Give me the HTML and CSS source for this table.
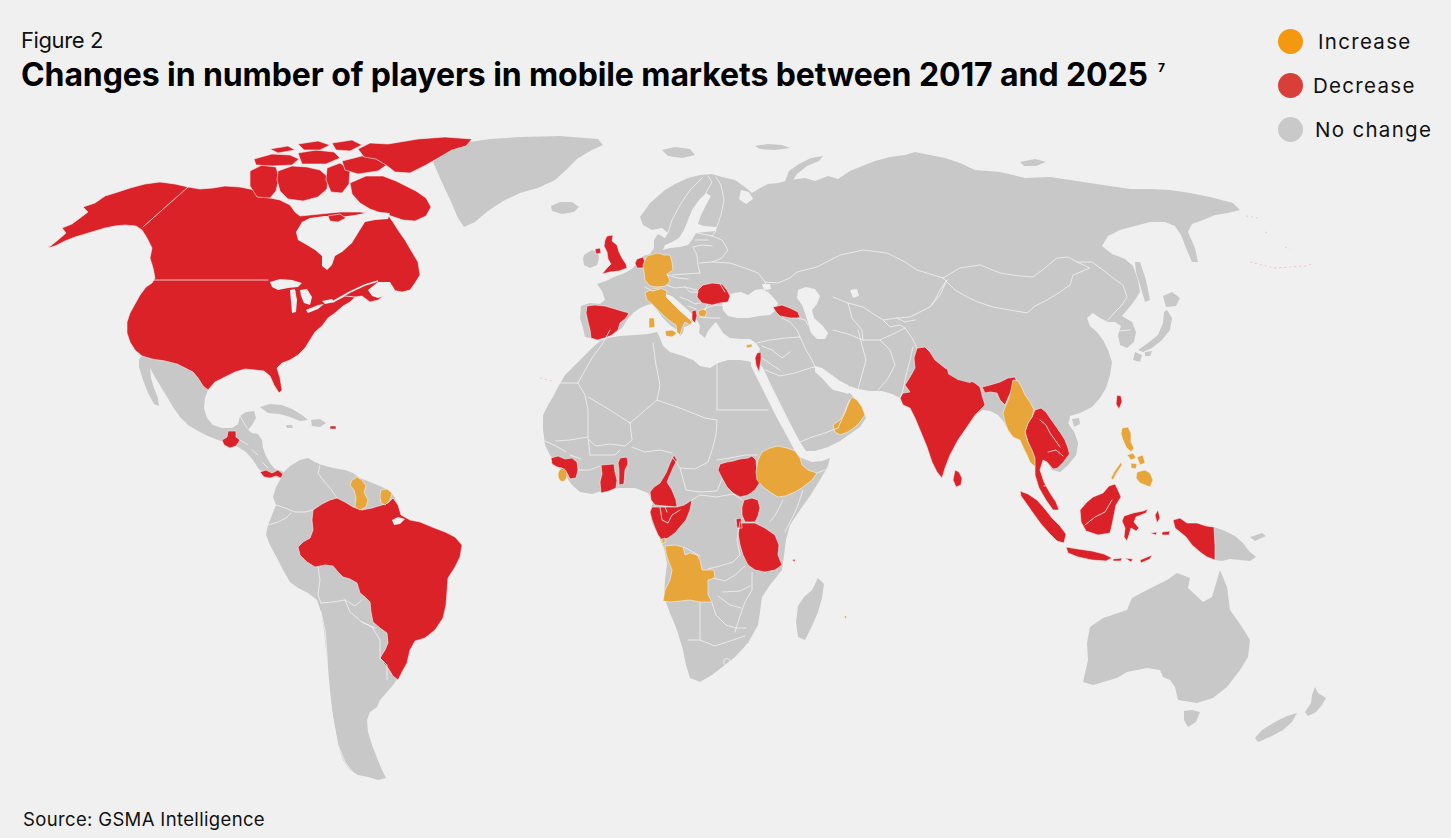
FILE: index.html
```html
<!DOCTYPE html>
<html lang="en">
<head>
<meta charset="utf-8">
<title>Figure 2</title>
<link rel="stylesheet" href="styles.css">
</head>
<body>
<div class="page">
  <header class="top">
    <div class="titles">
      <div class="kicker">Figure 2</div>
      <h1 class="title">Changes in number of players in mobile markets between 2017 and 2025<sup class="fn">7</sup></h1>
    </div>
    <ul class="legend">
      <li class="item"><span class="dot dot-inc"></span><span class="lbl lbl-inc">Increase</span></li>
      <li class="item"><span class="dot dot-dec"></span><span class="lbl">Decrease</span></li>
      <li class="item"><span class="dot dot-none"></span><span class="lbl lbl-none">No change</span></li>
    </ul>
  </header>

  <svg class="map" viewBox="0 135 1451 655" xmlns="http://www.w3.org/2000/svg">
    <g class="land">
      <path d="M432,150 L455,145 L470,142 L490,139 L520,137 L560,136 L598,139 L603,145 L590,151 L577,159 L566,170 L555,180 L538,188 L520,193 L503,201 L488,211 L475,222 L464,227 L458,218 L452,204 L446,191 L440,178 L434,164 Z"/>
      <path d="M551,206 L560,202 L572,202 L579,207 L574,212 L562,214 L552,211 Z"/>
      <path d="M662,150 L675,147 L690,149 L695,155 L682,158 L668,156 Z"/>
      <path d="M755,146 L768,144 L782,145 L790,148 L775,150 L760,149 Z"/>
      <path d="M785,181 L789,171 L799,164 L811,158 L823,156 L819,161 L807,166 L797,174 L791,183 Z"/>
      <path d="M1020,162 L1035,159 L1046,162 L1036,166 L1024,166 Z"/>
      <path d="M581,306 L590,303 L600,304 L605,300 L602,291 L597,284 L606,281 L614,277 L625,273 L633,268 L638,262 L643,256 L650,254 L654,248 L654,240 L658,234 L665,238 L668,233 L662,228 L652,230 L643,225 L640,217 L645,210 L650,203 L657,197 L665,190 L675,184 L688,178 L700,175 L712,174 L722,177 L735,180 L745,187 L752,193 L760,188 L768,184 L778,183 L790,180 L805,178 L815,181 L828,176 L838,179 L850,171 L862,166 L875,161 L890,157 L905,155 L915,152 L930,155 L945,158 L960,163 L975,170 L1000,172 L1025,178 L1050,177 L1070,180 L1090,183 L1110,186 L1130,189 L1150,189 L1170,190 L1190,193 L1210,197 L1233,203 L1240,210 L1228,213 L1215,215 L1203,220 L1192,224 L1188,232 L1195,248 L1198,262 L1192,262 L1186,248 L1181,235 L1175,226 L1165,222 L1150,222 L1135,226 L1120,230 L1108,236 L1102,246 L1112,254 L1125,259 L1133,266 L1138,280 L1140,292 L1133,303 L1127,310 L1122,316 L1132,322 L1136,332 L1134,342 L1127,348 L1120,345 L1118,335 L1121,326 L1115,322 L1108,322 L1100,318 L1093,313 L1087,318 L1090,326 L1097,332 L1103,340 L1108,350 L1112,362 L1110,375 L1106,388 L1100,398 L1092,407 L1080,413 L1070,416 L1068,423 L1074,432 L1078,443 L1076,455 L1068,465 L1060,472 L1052,470 L1047,462 L1043,460 L1040,470 L1044,482 L1050,493 L1056,502 L1059,510 L1053,510 L1046,500 L1039,488 L1035,475 L1035,467 L1030,462 L1027,455 L1023,447 L1020,440 L1013,437 L1008,430 L1004,422 L998,415 L990,411 L983,410 L977,414 L967,427 L958,440 L950,455 L945,468 L942,478 L937,472 L932,462 L927,447 L920,430 L915,418 L910,408 L903,405 L900,398 L892,394 L882,391 L870,391 L858,389 L850,386 L849,392 L856,400 L862,407 L866,418 L860,427 L850,434 L840,441 L828,447 L815,451 L803,451 L799,457 L812,462 L822,461 L830,458 L828,466 L820,480 L810,496 L800,510 L790,525 L786,540 L784,555 L782,570 L770,585 L762,597 L760,612 L758,625 L748,643 L735,657 L725,665 L712,675 L700,682 L690,678 L686,665 L683,650 L677,630 L670,613 L664,597 L665,580 L667,563 L664,548 L658,535 L652,523 L650,512 L653,502 L648,493 L635,488 L620,488 L605,490 L592,494 L580,492 L572,485 L565,475 L557,465 L550,455 L545,445 L543,430 L543,415 L548,405 L553,397 L558,387 L565,375 L575,365 L585,355 L593,347 L600,341 L594,339 L585,337 L583,328 L580,318 Z"/>
      <path d="M584,255 L592,250 L598,252 L599,258 L597,265 L590,268 L584,265 L583,259 Z"/>
      <path d="M650,308 L653,307 L654,313 L651,315 Z"/>
      <path d="M710,342 L720,341 L721,344 L711,345 Z"/>
      <path d="M1135,262 L1140,262 L1146,280 L1150,300 L1145,302 L1140,285 L1136,272 Z"/>
      <path d="M1163,296 L1172,292 L1180,298 L1176,306 L1166,307 Z"/>
      <path d="M1167,310 L1172,318 L1170,330 L1162,340 L1152,348 L1143,352 L1138,350 L1148,343 L1158,335 L1163,323 L1164,312 Z"/>
      <path d="M1135,352 L1142,355 L1140,362 L1133,360 Z"/>
      <path d="M1145,352 L1152,351 L1150,356 L1145,356 Z"/>
      <path d="M1072,419 L1079,418 L1080,424 L1074,427 Z"/>
      <path d="M1214,527 L1225,531 L1235,536 L1243,543 L1248,550 L1256,557 L1250,561 L1240,560 L1230,559 L1222,561 L1215,560 Z"/>
      <path d="M1250,537 L1262,533 L1266,536 L1255,541 Z"/>
      <path d="M1090,627 L1103,618 L1127,610 L1132,598 L1147,590 L1157,585 L1167,580 L1177,573 L1190,578 L1188,588 L1203,602 L1212,597 L1217,580 L1220,570 L1227,587 L1230,610 L1242,627 L1250,640 L1248,657 L1240,670 L1227,687 L1213,698 L1197,703 L1178,700 L1175,687 L1170,680 L1163,677 L1160,670 L1147,668 L1127,672 L1117,678 L1093,685 L1083,682 L1088,660 L1087,643 Z"/>
      <path d="M1184,711 L1192,710 L1200,712 L1196,722 L1188,727 L1184,720 Z"/>
      <path d="M1315,687 L1318,693 L1326,698 L1322,705 L1316,712 L1308,716 L1305,712 L1311,703 L1312,695 Z"/>
      <path d="M1297,713 L1292,722 L1283,730 L1270,737 L1258,742 L1255,738 L1262,730 L1275,722 L1287,716 Z"/>
      <path d="M818,578 L824,584 L822,598 L818,612 L812,626 L805,640 L798,637 L796,622 L798,606 L804,597 L812,590 Z"/>
      <path d="M142,356 L152,359 L165,361 L177,364 L185,368 L193,372 L198,378 L203,386 L208,390 L205,398 L204,408 L207,418 L213,425 L222,428 L232,428 L238,424 L240,416 L246,412 L254,411 L256,418 L252,425 L248,430 L252,433 L258,434 L262,440 L263,448 L266,456 L270,463 L275,469 L282,471 L286,475 L282,479 L276,477 L270,478 L264,474 L258,468 L253,460 L246,452 L238,447 L228,443 L218,440 L208,436 L198,431 L188,425 L180,417 L173,407 L167,397 L161,387 L155,377 L150,368 L151,378 L154,388 L158,398 L159,406 L154,404 L148,393 L143,380 L139,367 L139,359 Z"/>
      <path d="M260,407 L270,404 L282,405 L292,409 L302,415 L308,420 L300,421 L290,417 L280,414 L268,413 Z"/>
      <path d="M311,420 L320,419 L326,423 L320,427 L312,426 Z"/>
      <path d="M286,425 L292,425 L293,428 L287,428 Z"/>
      <path d="M282,474 L290,466 L300,460 L308,458 L315,462 L322,465 L333,468 L345,470 L353,473 L360,478 L370,482 L380,486 L388,490 L394,496 L398,505 L401,515 L410,520 L420,522 L432,527 L445,532 L455,537 L462,545 L460,557 L455,567 L448,578 L447,592 L446,605 L443,618 L435,630 L425,638 L415,641 L410,650 L407,663 L400,675 L393,685 L387,692 L380,700 L377,707 L370,712 L367,720 L368,732 L372,745 L377,758 L382,770 L386,778 L378,780 L368,777 L358,775 L350,770 L343,760 L338,745 L335,728 L332,710 L330,690 L328,670 L326,650 L324,630 L321,612 L317,600 L308,593 L298,588 L290,582 L283,570 L277,558 L270,545 L266,535 L268,525 L272,515 L276,505 L273,497 L276,487 L280,480 Z"/>
    </g>

    <g class="sea">
      <path d="M597,339 L605,336 L615,333 L622,328 L627,320 L633,313 L640,308 L647,305 L652,304 L657,310 L663,318 L670,325 L677,330 L680,336 L683,333 L684,327 L690,325 L693,321 L685,316 L677,310 L668,300 L665,294 L672,296 L680,303 L688,310 L696,318 L700,326 L699,333 L705,338 L708,331 L712,326 L716,322 L720,328 L723,333 L730,338 L740,339 L750,339 L756,343 L760,349 L757,358 L752,362 L740,360 L728,360 L718,363 L710,368 L700,366 L693,360 L683,356 L670,352 L663,346 L660,338 L657,332 L648,334 L635,335 L620,336 L608,338 L600,341 Z"/>
      <path d="M722,302 L727,296 L734,293 L741,292 L748,295 L755,290 L762,289 L768,292 L773,297 L778,303 L776,310 L770,315 L760,316 L748,318 L737,318 L728,316 L723,310 Z"/>
      <path d="M762,284 L770,284 L771,289 L764,290 Z"/>
      <path d="M798,290 L806,287 L815,289 L820,296 L817,304 L812,310 L814,318 L822,325 L828,333 L825,339 L817,339 L811,333 L808,323 L805,313 L802,305 L797,298 Z"/>
      <path d="M850,290 L857,289 L859,296 L853,298 Z"/>
      <path d="M815,366 L822,368 L832,375 L840,381 L848,385 L852,390 L848,394 L842,392 L833,390 L828,385 L822,378 L815,372 Z"/>
      <path d="M751,360 L757,359 L763,368 L771,385 L781,405 L791,425 L800,442 L806,451 L802,458 L797,455 L788,438 L777,418 L767,398 L758,380 L751,366 Z"/>
      <path d="M663,250 L670,248 L680,247 L688,245 L692,240 L696,233 L705,232 L716,231 L716,227 L704,226 L698,224 L701,215 L706,205 L711,196 L706,193 L699,200 L692,210 L688,220 L684,230 L679,238 L672,242 L665,245 Z"/>
      <path d="M741,190 L749,192 L753,199 L746,204 L739,199 Z"/>
    </g>

    <g class="dec">
      <path d="M48,248 L58,240 L66,233 L62,228 L72,224 L80,218 L88,212 L83,207 L95,203 L105,196 L118,192 L130,188 L145,184 L160,182 L175,184 L188,187 L200,189 L213,188 L225,186 L240,187 L255,190 L262,195 L270,198 L280,200 L290,205 L295,212 L300,216 L320,214 L340,212 L360,212 L375,214 L388,215 L393,222 L398,230 L405,240 L412,252 L418,262 L420,275 L415,283 L410,290 L402,292 L392,290 L385,295 L378,300 L370,302 L362,296 L355,297 L350,302 L343,306 L335,313 L328,318 L322,326 L315,332 L310,340 L305,348 L298,355 L290,360 L282,363 L277,368 L280,378 L282,390 L279,393 L274,385 L270,376 L264,371 L255,370 L245,369 L235,372 L225,377 L215,382 L208,390 L203,386 L198,378 L193,372 L185,368 L177,364 L165,361 L152,359 L142,356 L135,350 L130,342 L127,333 L127,322 L130,313 L135,304 L140,295 L146,287 L152,283 L155,278 L153,268 L150,258 L152,248 L147,238 L142,230 L136,226 L125,225 L115,226 L105,228 L95,231 L85,234 L75,237 L65,241 L55,246 Z"/>
      <path d="M250,171 L262,165 L276,167 L279,178 L276,191 L270,198 L257,197 L250,186 Z"/>
      <path d="M278,171 L292,166 L307,167 L320,170 L328,177 L327,189 L318,197 L303,201 L288,199 L280,191 L277,180 Z"/>
      <path d="M254,159 L272,154 L290,155 L299,159 L292,165 L272,166 L256,165 Z"/>
      <path d="M298,153 L316,150 L334,152 L340,158 L326,164 L302,164 Z"/>
      <path d="M298,144 L318,141 L330,145 L320,150 L304,150 Z"/>
      <path d="M332,143 L352,140 L362,145 L350,151 L336,150 Z"/>
      <path d="M270,149 L288,146 L295,150 L278,153 Z"/>
      <path d="M327,168 L340,163 L350,170 L349,184 L342,193 L331,192 L326,180 Z"/>
      <path d="M342,161 L362,156 L382,158 L388,164 L378,171 L358,174 L345,170 Z"/>
      <path d="M358,149 L370,143 L388,144 L400,142 L418,139 L445,137 L472,139 L466,146 L452,150 L440,157 L426,165 L410,173 L395,172 L386,165 L376,159 L364,157 Z"/>
      <path d="M350,183 L366,176 L383,176 L396,181 L406,186 L416,191 L426,198 L431,207 L426,216 L415,221 L403,220 L391,216 L381,213 L370,209 L360,203 L352,194 Z"/>
    </g>
    <g class="sea">
      <path d="M296,232 L302,222 L310,218 L325,216 L340,217 L355,215 L365,213 L378,212 L390,213 L388,219 L375,220 L365,222 L360,230 L352,243 L342,252 L335,256 L332,265 L327,270 L322,266 L322,256 L315,250 L305,244 L298,240 Z"/>
      <path d="M270,282 L280,279 L292,280 L302,283 L298,287 L288,288 L278,290 L272,287 Z"/>
      <path d="M290,290 L295,289 L297,300 L296,312 L292,313 L291,302 Z"/>
      <path d="M300,290 L307,289 L312,297 L310,305 L304,303 L301,296 Z"/>
      <path d="M306,310 L318,305 L324,304 L318,309 L308,313 Z"/>
      <path d="M322,301 L332,299 L335,302 L325,304 Z"/>
      <path d="M368,290 L378,282 L390,282 L395,290 L388,295 L378,298 L372,296 Z"/>
    </g>
    <path class="river" d="M334,301 L350,292 L365,285 L378,281"/>
    <g class="dec">
      <path d="M328,216 L340,214 L346,218 L338,222 L330,221 Z"/>
      <path d="M228,431 L236,431 L236,437 L240,440 L236,446 L230,448 L224,445 L222,440 L227,437 Z"/>
      <path d="M260,472 L266,470 L272,473 L278,470 L283,474 L281,478 L276,476 L270,478 L264,477 Z"/>
      <path d="M330,426 L336,426 L336,429 L330,429 Z"/>
      <path d="M313,510 L322,504 L330,500 L337,498 L345,502 L353,507 L362,510 L372,508 L382,505 L388,503 L393,498 L398,505 L401,515 L410,520 L420,522 L432,527 L445,532 L455,537 L462,545 L460,557 L455,567 L448,578 L447,592 L446,605 L443,618 L435,630 L425,638 L415,641 L410,650 L407,663 L402,672 L398,680 L393,676 L388,668 L383,662 L380,658 L385,650 L388,643 L387,633 L380,628 L373,622 L371,612 L370,602 L365,597 L360,593 L357,583 L350,579 L343,577 L338,572 L333,566 L325,565 L315,567 L307,562 L300,555 L298,547 L303,542 L310,538 L313,530 L312,520 Z"/>
    </g>
    <g class="sea">
      <path d="M392,520 L398,517 L405,519 L400,524 L394,525 Z"/>
    </g>
    <g class="inc">
      <path d="M352,480 L357,477 L362,480 L366,486 L364,492 L368,500 L366,507 L360,510 L355,507 L356,498 L354,490 L350,485 Z"/>
      <path d="M381,490 L387,489 L392,493 L390,500 L385,505 L381,503 L380,496 Z"/>
    </g>

    <g class="dec">
      <path d="M607,236 L613,235 L612,241 L617,245 L619,252 L622,258 L626,264 L627,268 L619,271 L610,272 L602,274 L607,268 L611,264 L608,259 L607,252 L604,246 L605,240 Z"/>
      <path d="M595,249 L600,248 L601,253 L596,254 Z"/>
      <path d="M637,259 L643,257 L645,262 L643,268 L637,268 L635,263 Z"/>
      <path d="M587,306 L595,305 L605,306 L612,308 L622,311 L629,313 L626,318 L620,323 L618,330 L612,335 L605,338 L597,340 L591,338 L590,330 L588,322 L586,313 Z"/>
      <path d="M703,285 L712,283 L722,284 L727,290 L730,296 L728,302 L720,303 L712,305 L702,303 L697,297 L698,290 Z"/>
      <path d="M692,311 L696,310 L697,316 L695,323 L692,320 Z"/>
      <path d="M773,307 L782,305 L790,308 L798,312 L800,318 L790,318 L780,316 L776,312 Z"/>
      <path d="M757,353 L761,352 L761,360 L759,372 L756,365 L755,358 Z"/>
    </g>
    <g class="inc">
      <path d="M647,256 L654,254 L658,253 L664,255 L670,255 L672,262 L673,270 L667,274 L670,281 L666,286 L658,287 L650,286 L645,280 L644,272 L643,265 L645,260 Z"/>
      <path d="M645,293 L652,289 L660,288 L667,291 L666,297 L672,303 L680,311 L687,317 L692,322 L690,325 L685,322 L682,328 L680,335 L677,332 L676,325 L670,321 L663,315 L657,309 L652,304 L647,300 Z"/>
      <path d="M649,318 L654,318 L655,327 L649,328 Z"/>
      <path d="M665,331 L672,330 L677,333 L672,337 L666,336 Z"/>
      <path d="M698,311 L704,309 L707,312 L705,317 L699,316 Z"/>
      <path d="M746,345 L752,344 L752,347 L747,348 Z"/>
    </g>

    <g class="dec">
      <path d="M551,458 L558,456 L565,459 L572,458 L577,462 L578,470 L576,478 L570,479 L567,473 L562,468 L557,467 L552,464 Z"/>
      <path d="M601,465 L614,464 L615,472 L617,480 L616,488 L609,491 L601,493 L600,482 L602,474 Z"/>
      <path d="M620,458 L627,457 L628,464 L625,470 L624,484 L619,485 L619,470 L618,463 Z"/>
      <path d="M674,455 L677,460 L673,468 L670,475 L667,482 L672,490 L676,500 L677,507 L665,506 L655,505 L651,500 L650,492 L654,487 L660,483 L666,473 L670,463 Z"/>
      <path d="M652,507 L665,507 L677,507 L684,505 L692,500 L690,510 L686,520 L680,527 L675,533 L668,538 L662,540 L658,535 L655,528 L652,520 L650,512 Z"/>
      <path d="M720,464 L727,462 L733,461 L740,459 L748,458 L752,456 L756,460 L757,472 L760,482 L755,490 L748,495 L740,497 L733,493 L727,487 L722,478 L718,470 Z"/>
      <path d="M744,500 L752,498 L758,500 L760,508 L758,516 L755,522 L745,522 L742,515 L742,507 Z"/>
      <path d="M740,523 L755,523 L765,528 L775,535 L779,545 L778,555 L782,565 L775,570 L765,572 L755,570 L748,565 L743,555 L740,545 L738,533 Z"/>
      <path d="M736,519 L741,518 L742,528 L737,528 Z"/>
      <path d="M792,560 L795,559 L795,562 Z"/>
    </g>
    <g class="inc">
      <ellipse cx="562.5" cy="475" rx="4.5" ry="6.5"/>
      <path d="M762,452 L770,448 L778,446 L787,448 L795,451 L800,458 L802,465 L808,470 L817,473 L812,480 L803,487 L795,492 L785,496 L778,497 L770,492 L763,487 L757,480 L756,472 L758,460 Z"/>
      <path d="M665,546 L675,545 L683,547 L685,555 L690,553 L697,555 L700,560 L702,570 L714,570 L715,578 L708,580 L708,595 L712,602 L700,602 L690,600 L680,601 L670,602 L663,601 L665,590 L670,580 L672,570 L668,560 L666,553 Z"/>
      <path d="M662,539 L665,538 L665,543 L662,543 Z"/>
      <path d="M852,397 L857,400 L862,407 L865,415 L860,422 L855,427 L848,432 L840,435 L835,432 L833,425 L840,420 L845,412 L848,403 Z"/>
      <circle cx="845.5" cy="617" r="1.2"/>
    </g>

    <g class="dec">
      <path d="M917,348 L925,347 L930,352 L935,360 L945,368 L955,373 L965,378 L975,383 L980,387 L982,395 L985,405 L980,410 L975,415 L967,427 L958,440 L950,455 L945,468 L942,478 L937,472 L932,462 L927,447 L920,430 L915,418 L910,408 L903,405 L900,398 L903,393 L910,392 L905,385 L910,377 L915,368 L914,358 Z"/>
      <path d="M982,387 L990,385 L1000,382 L1008,378 L1015,377 L1017,383 L1012,390 L1008,398 L1005,405 L1000,400 L997,393 L990,392 L985,393 Z"/>
      <path d="M955,470 L959,472 L962,478 L961,485 L956,487 L953,480 Z"/>
      <path d="M1035,410 L1041,408 L1046,412 L1050,418 L1055,425 L1060,432 L1065,440 L1068,448 L1070,456 L1066,463 L1060,468 L1053,469 L1047,462 L1043,460 L1040,470 L1044,482 L1050,493 L1056,502 L1059,510 L1053,510 L1046,500 L1039,488 L1035,475 L1035,467 L1032,452 L1028,442 L1025,432 L1028,423 L1032,417 Z"/>
      <path d="M1020,491 L1028,494 L1037,500 L1045,509 L1052,518 L1060,526 L1066,534 L1064,543 L1057,541 L1049,533 L1041,524 L1033,513 L1026,503 L1021,496 Z"/>
      <path d="M1066,547 L1078,549 L1092,551 L1104,554 L1112,558 L1106,561 L1092,560 L1078,557 L1068,553 Z"/>
      <path d="M1113,559 L1122,558 L1121,561 L1113,561 Z"/>
      <path d="M1125,558 L1133,559 L1131,562 Z"/>
      <path d="M1140,560 L1152,555 L1150,559 L1141,563 Z"/>
      <path d="M1080,510 L1087,502 L1093,497 L1103,493 L1109,486 L1115,484 L1118,490 L1121,497 L1116,505 L1114,515 L1112,525 L1110,533 L1098,535 L1086,531 L1081,522 Z"/>
      <path d="M1124,516 L1133,513 L1143,511 L1148,509 L1146,513 L1136,517 L1134,522 L1139,528 L1136,531 L1131,528 L1129,535 L1127,541 L1124,537 L1125,528 L1122,521 Z"/>
      <path d="M1155,515 L1158,510 L1160,518 L1157,523 Z"/>
      <path d="M1162,532 L1170,531 L1169,535 L1162,535 Z"/>
      <path d="M1150,533 L1157,532 L1156,535 Z"/>
      <path d="M1173,520 L1180,518 L1187,523 L1197,523 L1206,526 L1214,527 L1215,545 L1215,560 L1207,557 L1200,552 L1192,545 L1186,537 L1180,532 L1175,528 Z"/>
      <path d="M1117,395 L1121,396 L1122,402 L1119,409 L1116,404 Z"/>
    </g>
    <g class="land">
      <path d="M947,368 L958,370 L968,376 L975,380 L970,383 L958,380 L948,374 Z"/>
      <path d="M985,395 L992,393 L997,396 L1000,403 L998,410 L992,411 L987,407 Z"/>
      <path d="M1050,410 L1058,408 L1066,413 L1070,418 L1068,424 L1074,432 L1078,443 L1076,455 L1068,465 L1060,472 L1056,469 L1063,462 L1069,454 L1070,446 L1064,437 L1058,430 L1055,422 L1051,416 Z"/>
    </g>
    <g class="inc">
      <path d="M1013,380 L1018,381 L1022,388 L1025,395 L1030,402 L1034,410 L1032,417 L1028,423 L1025,432 L1028,442 L1032,450 L1035,458 L1035,467 L1030,462 L1027,455 L1023,447 L1020,440 L1013,437 L1008,430 L1005,422 L1003,413 L1006,405 L1009,398 L1011,390 Z"/>
      <path d="M1122,428 L1128,427 L1131,433 L1131,442 L1134,448 L1131,452 L1126,447 L1123,440 L1121,434 Z"/>
      <path d="M1127,455 L1133,453 L1136,458 L1131,460 Z"/>
      <path d="M1137,457 L1143,455 L1145,463 L1140,465 Z"/>
      <path d="M1131,463 L1137,464 L1136,469 L1131,468 Z"/>
      <path d="M1137,472 L1145,470 L1150,473 L1153,480 L1150,487 L1145,485 L1140,483 L1136,478 Z"/>
      <path d="M1111,478 L1114,472 L1121,462 L1122,465 L1116,474 L1113,480 Z"/>
    </g>

    <path class="bd" d="M153,280 L268,280 M188,187 L143,227 M333,302 L345,296 L355,297
      M240,416 L247,428 M240,440 L248,445 M252,450 L258,455 M262,462 L268,468
      M320,465 L318,473 L323,480 L330,488 L337,498 M276,505 L285,508 L295,512 L305,512 L313,510 M268,525 L278,522 L286,518 L291,513
      M318,567 L320,580 L318,595 L321,603 M321,603 L333,602 L345,600 L355,606 L362,600 M345,600 L350,612 L362,622 L375,628
      M321,612 L325,630 L327,655 L328,680 L330,700 L333,720 L338,745 L345,762 L355,775 M362,622 L372,627 L380,640 L380,658 M380,658 L387,665 L387,680
      M693,247 L697,255 L698,265 L700,273 M672,275 L685,274 L700,273 M693,247 L702,245 L712,246 M695,240 L708,240 M697,233 L712,236
      M712,236 L722,240 L728,250 L722,258 L712,262 L700,263 M712,262 L730,263 L745,268 L758,273 L765,282 L768,290 M720,284 L725,292
      M667,275 L678,278 L688,279 M666,285 L675,288 L685,287 L697,290 M685,287 L690,292 L698,292 M645,287 L652,291 L660,289
      M680,297 L688,300 L695,304 L700,303 M688,306 L696,309 M704,309 L712,306 L720,305 L726,306 M700,317 L710,318 L720,318 M705,310 L707,305
      M668,233 L672,220 L680,205 L690,190 L702,178 M706,193 L712,182 L708,176 M716,229 L721,215 L724,200 L721,185 L716,177 M712,236 L716,231
      M782,318 L790,322 L797,330 L800,337 M798,318 L805,320 L808,325 M757,343 L770,340 L785,338 L800,337
      M762,346 L772,350 L782,358 L790,352 M762,358 L772,365 L780,370 M800,337 L806,350 L812,360 L815,367 M765,370 L780,376 L795,373 L810,368 L815,367
      M800,442 L812,437 L825,433 L838,428 M838,428 L845,412 L850,400
      M858,330 L862,345 L866,360 L862,375 L858,389 M833,330 L848,334 L863,340 L880,340 L895,333 L905,328
      M833,297 L848,303 L863,307 L875,315 L883,320 L897,318 L910,317 L920,312 L930,307 L940,295 L947,280 M848,303 L852,318 L862,330 L863,340
      M883,320 L890,327 L900,325 L905,328 M897,318 L905,322 L915,320 M880,340 L890,350 L895,365 L887,380 L878,390 M913,347 L910,360 L906,375 L903,390 L900,398
      M905,328 L912,338 L917,348 M765,282 L778,283 L790,278 L797,272 L817,267 L840,255 L863,250 L887,253 L905,262 L917,270 L943,278
      M943,278 L960,268 L980,265 L1000,273 L1020,276 L1033,277 L1045,268 L1057,258 L1068,257 L1077,262 L1090,268 L1073,275 L1070,285 L1060,292 L1047,300 L1035,306 L1027,313 L1010,310 L993,307 L978,302 L967,297 L955,290 L947,282 L943,278
      M1077,262 L1092,262 L1103,270 L1113,278 L1123,285 L1127,297 L1122,305 L1115,312 L1108,320 M947,280 L940,290 L935,300 L930,307 M1118,331 L1130,330
      M1040,420 L1046,425 L1050,433 L1055,440 L1060,447 M1048,452 L1056,450 L1063,456 M1044,486 L1051,485 M1085,525 L1095,517 L1105,512 L1112,500
      M610,330 L603,343 L592,358 L578,383 M560,383 L578,383 M578,383 L585,395 L588,410 L588,437 L570,440 L556,441 M588,397 L610,410 L630,423
      M630,423 L632,440 L625,446 L610,444 L596,446 L589,440 M653,343 L656,365 L660,385 L657,400 L677,407 M630,423 L657,400 M632,447 L645,452 L660,450 L672,453
      M677,407 L690,412 L705,418 L717,420 L716,435 L712,450 L708,462 L695,469 L680,468 L673,458 M717,363 L717,410 M717,410 L768,410 M717,460 L730,458 L745,455 L757,455
      M680,468 L686,490 L700,492 L717,491 L722,479 M692,500 L700,495 L717,497 L733,494 L742,500 M740,522 L737,540 L740,555 L733,562 L720,566 L708,569 M684,547 L700,556
      M713,578 L725,581 L735,575 L745,566 M723,592 L740,591 L750,586 M752,572 L752,590 L745,602 L740,616 L735,632 M718,596 L730,605 L741,608
      M700,602 L700,625 L700,640 M712,603 L716,615 L726,625 L736,628 L746,628 M688,640 L700,640 L715,646 L730,641 L745,636
      M783,500 L776,514 L770,522 M803,490 L797,508 L790,522 L785,532 M545,441 L556,446 L566,452 M570,455 L581,459 M578,470 L590,470 L600,466
      M590,455 L601,455 L615,455 L620,450 M588,437 L590,455 M817,473 L825,470 M660,507 L662,520 L668,523 L672,515 L680,510 M665,507 L667,512"/>
    <circle class="bd" cx="727" cy="662" r="3.5"/>
    <circle class="bd" cx="748" cy="646" r="2"/>
    <path class="chain" d="M1246,216 L1258,218 M1265,232 L1270,234 M1285,247 L1290,249 M1250,262 L1262,265 L1275,268 L1290,267 L1305,266 L1313,264 M540,378 L552,381 M48,246 L53,248"/>
  </svg>

  <p class="source">Source: GSMA Intelligence</p>
</div>
</body>
</html>
```

FILE: styles.css
```css
* { box-sizing: border-box; }

html, body {
  margin: 0;
  background: #f0f0f0;
}

body {
  font-family: Inter, "Noto Sans", "Liberation Sans", sans-serif;
  color: #111111;
}

.page {
  width: 1451px;
  height: 838px;
  overflow: hidden;
}

.top {
  height: 135px;
  display: flex;
  justify-content: space-between;
  align-items: flex-start;
  padding-left: 21px;
}

.titles {
  padding-top: 27px;
}

.kicker {
  font-size: 22px;
  line-height: 26px;
  font-weight: 400;
  letter-spacing: -0.4px;
}

.title {
  margin: 3px 0 0;
  font-size: 32px;
  line-height: 38px;
  font-weight: 700;
  letter-spacing: -0.1px;
  color: #000;
}

.fn {
  display: inline-block;
  margin-left: 10px;
  font-size: 12px;
  line-height: 0;
  vertical-align: 14px;
}

.legend {
  list-style: none;
  margin: 0;
  padding: 29px 0 0;
  width: 173px;
}

.item {
  display: flex;
  align-items: center;
  gap: 10px;
  height: 25px;
  margin-bottom: 19px;
  font-size: 20.5px;
  letter-spacing: 1.3px;
  white-space: nowrap;
}

.lbl-inc { margin-left: 5px; }
.lbl-none { margin-left: 2px; }

.dot {
  flex: none;
  width: 25px;
  height: 25px;
  border-radius: 50%;
}

.dot-inc { background: #f4990f; }
.dot-dec { background: #d93f39; }
.dot-none { background: #c9c9c9; }

.map {
  display: block;
  width: 1451px;
  height: 655px;
}

.land path, .land { fill: #c8c8c8; }
.sea path, .sea { fill: #f0f0f0; }
.dec path, .dec { fill: #dc2229; stroke: #f3f3f3; stroke-width: 0.6; stroke-linejoin: round; }
.inc path, .inc ellipse, .inc circle, .inc { fill: #e8a53a; stroke: #f3f3f3; stroke-width: 0.6; stroke-linejoin: round; }

.bd {
  fill: none;
  stroke: #f3f3f3;
  stroke-width: 0.8;
  stroke-linejoin: round;
  stroke-linecap: round;
}

.river {
  fill: none;
  stroke: #f0f0f0;
  stroke-width: 1.6;
}

.chain {
  fill: none;
  stroke: #f3c4c6;
  stroke-width: 1;
  stroke-dasharray: 2 3;
}

.source {
  margin: 0;
  padding: 18px 0 0 23px;
  font-size: 18.5px;
  line-height: 22px;
  letter-spacing: 0.35px;
  color: #111111;
}
```
